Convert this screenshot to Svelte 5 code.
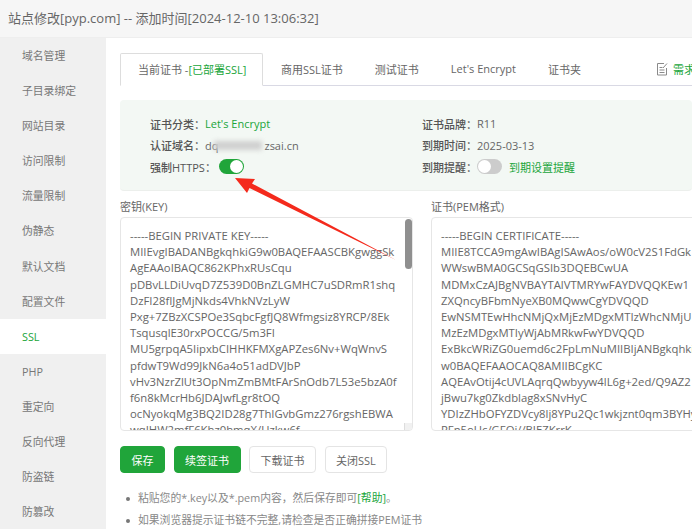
<script>
  // side menu and certificate data
  const menu = ['域名管理', '子目录绑定', '网站目录', '访问限制', '流量限制', '伪静态', '默认文档', '配置文件', 'SSL', 'PHP', '重定向', '反向代理', '防盗链', '防篡改'];
  const tabs = ['商用SSL证书', '测试证书', "Let's Encrypt", '证书夹'];

  const keyLines = [
    '-----BEGIN PRIVATE KEY-----',
    'MIIEvgIBADANBgkqhkiG9w0BAQEFAASCBKgwggSk',
    'AgEAAoIBAQC862KPhxRUsCqu',
    'pDBvLLDiUvqD7Z539D0BnZLGMHC7uSDRmR1shq',
    'DzFI28fIJgMjNkds4VhkNVzLyW',
    'Pxg+7ZBzXCSPOe3SqbcFgfJQ8Wfmgsiz8YRCP/8Ek',
    'TsqusqlE30rxPOCCG/5m3FI',
    'MU5grpqA5IipxbCIHHKFMXgAPZes6Nv+WqWnvS',
    'pfdwT9Wd99JkN6a4o51adDVJbP',
    'vHv3NzrZlUt3OpNmZmBMtFArSnOdb7L53e5bzA0f',
    'f6n8kMcrHb6JDAJwfLgr8tOQ',
    'ocNyokqMg3BQ2ID28g7ThIGvbGmz276rgshEBWA',
    'wqIHW2mfF6Khz0hmqX/Uzkw6f'
  ];

  const certLines = [
    '-----BEGIN CERTIFICATE-----',
    'MIIE8TCCA9mgAwIBAgISAwAos/oW0cV2S1FdGk',
    'WWswBMA0GCSqGSIb3DQEBCwUA',
    'MDMxCzAJBgNVBAYTAlVTMRYwFAYDVQQKEw1',
    'ZXQncyBFbmNyeXB0MQwwCgYDVQQD',
    'EwNSMTEwHhcNMjQxMjEzMDgxMTIzWhcNMjU',
    'MzEzMDgxMTIyWjAbMRkwFwYDVQQD',
    'ExBkcWRiZG0uemd6c2FpLmNuMIIBIjANBgkqhki',
    'w0BAQEFAAOCAQ8AMIIBCgKC',
    'AQEAvOtij4cUVLAqrqQwbyyw4lL6g+2ed/Q9AZ2',
    'jBwu7kg0Zkdblag8xSNvHyC',
    'YDIzZHbOFYZDVcy8lj8YPu2Qc1wkjznt0qm3BYHy',
    'PFn5oUc/GFOj//BJEZKrrK'
  ];
</script>

<div class="page">
  <header class="title">站点修改[pyp.com] -- 添加时间[2024-12-10 13:06:32]</header>

  <div class="body">
    <nav class="side">
      {#each menu as item}
        <div class="item" class:on={item === 'SSL'}>{item}</div>
      {/each}
    </nav>

    <main class="main">
      <div class="tabs">
        <div class="tab active">当前证书 -<span class="green">[已部署SSL]</span></div>
        {#each tabs as tab}
          <div class="tab">{tab}</div>
        {/each}
        <div class="need">
          <svg width="12" height="14" viewBox="0 0 12 14" fill="none" stroke="#8a8a8a" stroke-width="1">
            <path d="M8 1.5H1.5v11.5h9V6" />
            <path d="M3.5 5.5h3M3.5 8h5M3.5 10.5h5" />
            <path d="M7 6l4-4.5" />
          </svg>
          <span class="green">需求</span>
        </div>
      </div>

      <section class="info">
        <div class="cell"><b>证书分类：</b><span class="green">Let's Encrypt</span></div>
        <div class="cell"><b>证书品牌：</b><span>R11</span></div>
        <div class="cell">
          <b>认证域名：</b><span class="domain">dq<i class="smear"></i>zsai.cn</span>
        </div>
        <div class="cell"><b>到期时间：</b><span>2025-03-13</span></div>
        <div class="cell">
          <b class="https">强制HTTPS：</b><span class="switch on"></span>
        </div>
        <div class="cell">
          <b>到期提醒：</b><span class="switch"></span><span class="green remind">到期设置提醒</span>
        </div>
      </section>

      <section class="boxes">
        <div class="box">
          <div class="box-label">密钥(KEY)</div>
          <div class="area">
            {#each keyLines as line}
              <div>{line}</div>
            {/each}
            <span class="thumb"></span>
            <span class="grip"></span>
          </div>
        </div>
        <div class="box wide">
          <div class="box-label">证书(PEM格式)</div>
          <div class="area">
            {#each certLines as line}
              <div>{line}</div>
            {/each}
          </div>
        </div>
      </section>

      <div class="buttons">
        <button class="btn primary">保存</button>
        <button class="btn primary">续签证书</button>
        <button class="btn">下载证书</button>
        <button class="btn">关闭SSL</button>
      </div>

      <ul class="tips">
        <li>粘贴您的*.key以及*.pem内容，然后保存即可<span class="green">[帮助]</span>。</li>
        <li>如果浏览器提示证书链不完整,请检查是否正确拼接PEM证书</li>
      </ul>
    </main>
  </div>

  <!-- red annotation arrow drawn over the screenshot -->
  <svg class="arrow" width="692" height="529" viewBox="0 0 692 529">
    <path d="M396 260 L252 183.5 L255 179 L235 178 L247 193 L249.5 188 Z" fill="#f42a1c" />
  </svg>
</div>

<style>
  :global(body) {
    background: #fff;
    font-family: "Open Sans", "Noto Sans CJK SC", sans-serif;
    font-size: 11px;
    color: #666;
  }

  .page {
    position: relative;
    width: 692px;
    height: 529px;
    overflow: hidden;
  }

  .title {
    height: 37px;
    line-height: 37px;
    padding-left: 8px;
    font-size: 13px;
    color: #666;
    background: #f6f6f6;
    border-bottom: 1px solid #eee;
    white-space: nowrap;
  }

  .body {
    display: flex;
    height: 491px;
  }

  .side {
    flex: 0 0 106px;
    background: #f0f0f0;
  }

  .item {
    height: 35.1px;
    line-height: 35.1px;
    padding-left: 22px;
    font-size: 10.8px;
    color: #777;
  }

  .item.on {
    background: #fff;
    color: #20a53a;
  }

  .main {
    flex: 1;
    min-width: 0;
    padding: 14px 0 0 14px;
    overflow: hidden;
  }

  .green {
    color: #20a53a;
  }

  .tabs {
    display: flex;
    height: 33px;
    align-items: center;
    border-bottom: 1px solid #d9d9e4;
    white-space: nowrap;
  }

  .tab {
    flex: none;
    padding: 0 16px;
    color: #666;
  }

  .tab.active {
    height: 33px;
    line-height: 31px;
    width: 143px;
    padding: 0 0 0 17px;
    margin-right: 2px;
    background: #fff;
    border: 1px solid #ddd;
    border-bottom: 1px solid #fff;
    border-radius: 2px 2px 0 0;
    box-sizing: border-box;
    position: relative;
    top: 1px;
  }

  .need {
    flex: none;
    display: flex;
    align-items: center;
    gap: 5px;
    margin-left: 59px;
  }

  .info {
    display: grid;
    grid-template-columns: 272px 1fr;
    grid-auto-rows: 21.5px;
    align-items: center;
    margin-top: 14px;
    height: 91px;
    box-sizing: border-box;
    padding: 13px 0 0 30px;
    background: #f3f8f4;
    border-radius: 4px;
    border-bottom: 1px solid #ecefec;
    white-space: nowrap;
  }

  .cell {
    display: flex;
    align-items: center;
  }

  .cell b {
    flex: 0 0 54px;
    font-weight: 500;
    color: #555;
  }

  .cell b.https {
    flex-basis: 69px;
  }

  .domain {
    display: inline-flex;
    align-items: center;
    color: #666;
  }

  .smear {
    display: inline-block;
    width: 48px;
    height: 9px;
    margin: 0 2px 0 -4px;
    background: #cfcfcf;
    filter: blur(2.5px);
  }

  .switch {
    position: relative;
    display: inline-block;
    width: 25px;
    height: 15px;
    border-radius: 8px;
    background: #ccc;
  }

  .switch::after {
    content: "";
    position: absolute;
    top: 1px;
    left: 1px;
    width: 13px;
    height: 13px;
    border-radius: 50%;
    background: #fff;
  }

  .switch.on {
    background: #20a53a;
  }

  .switch.on::after {
    left: 11px;
  }

  .remind {
    margin-left: 7px;
  }

  .boxes {
    display: flex;
    gap: 18px;
    margin-top: 7px;
  }

  .box {
    flex: 0 0 293px;
  }

  .box.wide {
    flex: 0 0 300px;
  }

  .box-label {
    height: 19px;
    line-height: 17px;
    color: #666;
  }

  .area {
    position: relative;
    height: 214px;
    box-sizing: border-box;
    padding: 10px 0 0 9px;
    border: 1px solid #e6e6e6;
    border-radius: 4px;
    overflow: hidden;
    font-size: 11.3px;
    line-height: 16.2px;
    color: #666;
    white-space: nowrap;
  }

  .thumb {
    position: absolute;
    top: 1px;
    right: 0;
    width: 7px;
    height: 50px;
    border-radius: 4px;
    background: #8f8f8f;
  }

  .grip {
    position: absolute;
    right: 0;
    bottom: 0;
    width: 7px;
    height: 7px;
    background: #f1f1f1;
    border-left: 1px solid #ddd;
  }

  .buttons {
    display: flex;
    gap: 8.5px;
    margin-top: 15px;
  }

  .btn {
    height: 27px;
    padding: 0 10.5px;
    font: inherit;
    color: #666;
    background: #fff;
    border: 1px solid #e4e4e4;
    border-radius: 4px;
  }

  .btn.primary {
    color: #fff;
    background: #20a53a;
    border-color: #20a53a;
  }

  .tips {
    list-style: none;
    margin: 14px 0 0;
    padding: 0;
    font-size: 10.8px;
    color: #888;
    white-space: nowrap;
  }

  .tips li {
    position: relative;
    height: 22px;
    line-height: 22px;
    padding-left: 18px;
  }

  .tips li::before {
    content: "";
    position: absolute;
    left: 6px;
    top: 10px;
    width: 4px;
    height: 4px;
    border-radius: 50%;
    background: #777;
  }

  .arrow {
    position: absolute;
    left: 0;
    top: 0;
    pointer-events: none;
  }
</style>
